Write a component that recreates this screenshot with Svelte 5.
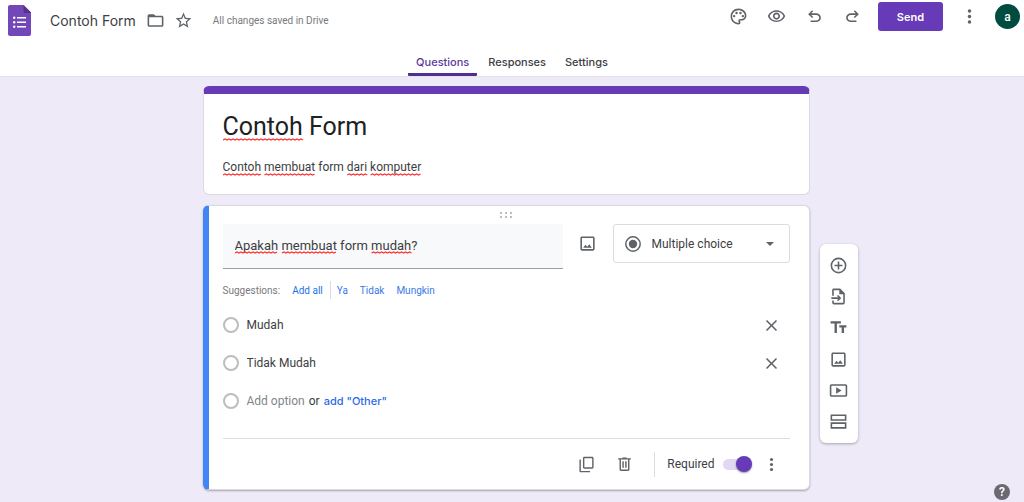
<script>
	let docName = $state('Contoh Form');
	let title = $state('Contoh Form');
	let description = $state('Contoh membuat form dari komputer');
	let question = $state('Apakah membuat form mudah?');
	let options = $state(['Mudah', 'Tidak Mudah']);
	let type = $state('Multiple choice');
	let required = $state(true);
	let activeTab = $state('Questions');

	const tabs = ['Questions', 'Responses', 'Settings'];
	const suggestions = ['Ya', 'Tidak', 'Mungkin'];
	const types = ['Short answer', 'Paragraph', 'Multiple choice', 'Checkboxes', 'Dropdown'];
	const dictionary = ['form'];

	const canvas = document.createElement('canvas').getContext('2d');

	// zigzag under every word that is not in the dictionary
	function spellMarks(text, size) {
		canvas.font = `${size}px Roboto`;
		let d = '';
		for (const match of text.matchAll(/[a-z]+/gi)) {
			if (dictionary.includes(match[0].toLowerCase())) continue;
			const start = canvas.measureText(text.slice(0, match.index)).width;
			const end = start + canvas.measureText(match[0]).width;
			d += `M${start} 2`;
			for (let x = start + 2, up = true; x <= end; x += 2, up = !up) {
				d += `L${x} ${up ? 1 : 2}`;
			}
		}
		return d;
	}

	function addOption(value) {
		options.push(value);
	}

	function removeOption(index) {
		options.splice(index, 1);
	}
</script>

{#snippet icon(name)}
	<svg class="icon" viewBox="0 0 24 24" aria-hidden="true">
		{#if name === 'folder'}
			<path d="M20 6h-8l-2-2H4c-1.1 0-2 .9-2 2v12c0 1.1.9 2 2 2h16c1.1 0 2-.9 2-2V8c0-1.1-.9-2-2-2zm0 12H4V8h16v10z" />
		{:else if name === 'star'}
			<path d="M22 9.24l-7.19-.62L12 2 9.19 8.63 2 9.24l5.46 4.73L5.82 21 12 17.27 18.18 21l-1.63-7.03L22 9.24zM12 15.4l-3.76 2.27 1-4.28-3.32-2.88 4.38-.38L12 6.1l1.71 4.04 4.38.38-3.32 2.88 1 4.28L12 15.4z" />
		{:else if name === 'palette'}
			<path d="M12 22C6.49 22 2 17.51 2 12S6.49 2 12 2s10 4.04 10 9c0 3.31-2.69 6-6 6h-1.77c-.28 0-.5.22-.5.5 0 .12.05.23.13.33.41.47.64 1.06.64 1.67A2.5 2.5 0 0 1 12 22zm0-18c-4.41 0-8 3.59-8 8s3.59 8 8 8c.28 0 .5-.22.5-.5a.54.54 0 0 0-.14-.35c-.41-.46-.63-1.05-.63-1.65a2.5 2.5 0 0 1 2.5-2.5H16c2.21 0 4-1.79 4-4 0-3.86-3.59-7-8-7z" />
			<circle cx="6.5" cy="11.5" r="1.5" />
			<circle cx="9.5" cy="7.5" r="1.5" />
			<circle cx="14.5" cy="7.5" r="1.5" />
			<circle cx="17.5" cy="11.5" r="1.5" />
		{:else if name === 'eye'}
			<path d="M12 6a9.77 9.77 0 0 1 8.82 5.5 9.647 9.647 0 0 1-17.64 0A9.77 9.77 0 0 1 12 6m0-2C7 4 2.73 7.11 1 11.5 2.73 15.89 7 19 12 19s9.27-3.11 11-7.5C21.27 7.11 17 4 12 4zm0 5a2.5 2.5 0 0 1 0 5 2.5 2.5 0 0 1 0-5m0-2c-2.48 0-4.5 2.02-4.5 4.5S9.52 16 12 16s4.5-2.02 4.5-4.5S14.48 7 12 7z" />
		{:else if name === 'undo' || name === 'redo'}
			<path
				transform={name === 'redo' ? 'matrix(-1 0 0 1 24 0)' : undefined}
				d="M7 19v-2h7.1c1.05 0 1.96-.33 2.74-1 .78-.67 1.16-1.5 1.16-2.5s-.38-1.83-1.16-2.5C16.06 10.33 15.15 10 14.1 10H7.8l2.6 2.6L9 14 4 9l5-5 1.4 1.4L7.8 8h6.3c1.62 0 3 .53 4.16 1.58S20 11.93 20 13.5s-.58 2.88-1.74 3.93S15.72 19 14.1 19z"
			/>
		{:else if name === 'more'}
			<circle cx="12" cy="5" r="2.2" />
			<circle cx="12" cy="12" r="2.2" />
			<circle cx="12" cy="19" r="2.2" />
		{:else if name === 'image'}
			<path d="M19 5v14H5V5h14m0-2H5c-1.1 0-2 .9-2 2v14c0 1.1.9 2 2 2h14c1.1 0 2-.9 2-2V5c0-1.1-.9-2-2-2z" />
			<path d="M6.5 17.5l3-4 2.2 2.5 2.5-3 3.3 4.5z" />
		{:else if name === 'close'}
			<path d="M19 6.4L17.6 5 12 10.6 6.4 5 5 6.4 10.6 12 5 17.6 6.4 19 12 13.4 17.6 19 19 17.6 13.4 12z" />
		{:else if name === 'copy'}
			<path d="M20 1H9C7.9 1 7 1.9 7 3v13c0 1.1.9 2 2 2h11c1.1 0 2-.9 2-2V3c0-1.1-.9-2-2-2zm0 15H9V3h11v13zM4 5H2v16c0 1.1.9 2 2 2h13v-2H4z" />
		{:else if name === 'trash'}
			<path d="M15 3V2H9v1H3v2h2v14c0 1.1.9 2 2 2h10c1.1 0 2-.9 2-2V5h2V3h-6zm2 16H7V5h10v14zM9 7.5h2v9H9zm4 0h2v9h-2z" />
		{:else if name === 'add'}
			<path d="M13 7h-2v4H7v2h4v4h2v-4h4v-2h-4V7zm-1-5a10 10 0 1 0 0 20 10 10 0 0 0 0-20zm0 18a8 8 0 1 1 0-16 8 8 0 0 1 0 16z" />
		{:else if name === 'import'}
			<path d="M14 2H6c-1.1 0-2 .9-2 2v7h2V4h7v5h5v11H6v-3H4v3c0 1.1.9 2 2 2h12c1.1 0 2-.9 2-2V8l-6-6z" />
			<path d="M11.5 10l-1.4 1.4 1.6 1.6H3v2h8.7l-1.6 1.6 1.4 1.4 4-4z" />
		{:else if name === 'text'}
			<path d="M2 4v3h5v12h3V7h5V4H2zm20 5h-9v3h3v7h3v-7h3V9z" />
		{:else if name === 'video'}
			<path d="M21 4H3c-1.1 0-2 .9-2 2v12c0 1.1.9 2 2 2h18c1.1 0 2-.9 2-2V6c0-1.1-.9-2-2-2zm0 14H3V6h18v12zM9 8v8l7-4z" />
		{:else if name === 'section'}
			<path d="M2 3v8h20V3H2zm18 6H4V5h16v4zM2 13v8h20v-8H2zm18 6H4v-4h16v4z" />
		{/if}
	</svg>
{/snippet}

<header>
	<div class="bar">
		<div class="file">
			<a class="home" href="#home" aria-label="Forms home">
				<svg viewBox="0 0 23 31" aria-hidden="true">
					<path fill="#7248b9" d="M2 0h13.5L23 7.5V29a2 2 0 0 1-2 2H2a2 2 0 0 1-2-2V2a2 2 0 0 1 2-2z" />
					<path fill="#54348a" d="M15.5 0L23 7.5V8h-6a1.5 1.5 0 0 1-1.5-1.5z" />
					<g fill="#fff">
						<circle cx="6.2" cy="12.8" r="1.2" />
						<circle cx="6.2" cy="17.3" r="1.2" />
						<circle cx="6.2" cy="21.8" r="1.2" />
						<path d="M9 12h9v1.6H9zM9 16.5h9v1.6H9zM9 21h9v1.6H9z" />
					</g>
				</svg>
			</a>
			<input class="doc-name" aria-label="Document name" spellcheck="false" bind:value={docName} />
			<button class="tool small" aria-label="Move to folder">{@render icon('folder')}</button>
			<button class="tool small" aria-label="Star">{@render icon('star')}</button>
			<span class="saved">All changes saved in Drive</span>
		</div>
		<div class="tools">
			<button class="tool" aria-label="Customize theme">{@render icon('palette')}</button>
			<button class="tool" aria-label="Preview">{@render icon('eye')}</button>
			<button class="tool" aria-label="Undo">{@render icon('undo')}</button>
			<button class="tool" aria-label="Redo">{@render icon('redo')}</button>
			<button class="send">Send</button>
			<button class="tool small" aria-label="More">{@render icon('more')}</button>
			<button class="avatar">a</button>
		</div>
	</div>
	<div class="tabs" role="tablist">
		{#each tabs as tab}
			<button
				role="tab"
				class:active={tab === activeTab}
				aria-selected={tab === activeTab}
				onclick={() => (activeTab = tab)}
			>
				{tab}
			</button>
		{/each}
	</div>
</header>

<main>
	<section class="card intro">
		<div class="editable title">
			<input aria-label="Form title" spellcheck="false" bind:value={title} />
			<svg class="marks" aria-hidden="true"><path d={spellMarks(title, 25)} /></svg>
		</div>
		<div class="editable description">
			<input aria-label="Form description" spellcheck="false" bind:value={description} />
			<svg class="marks" aria-hidden="true"><path d={spellMarks(description, 12)} /></svg>
		</div>
	</section>

	<section class="card question">
		<div class="drag">
			<svg viewBox="0 0 12 6" aria-hidden="true">
				<path d="M0 0h2v2H0zM5 0h2v2H5zM10 0h2v2h-2zM0 4h2v2H0zM5 4h2v2H5zM10 4h2v2h-2z" />
			</svg>
		</div>

		<div class="prompt">
			<div class="field">
				<div class="editable">
					<input aria-label="Question" spellcheck="false" bind:value={question} />
					<svg class="marks" aria-hidden="true"><path d={spellMarks(question, 13)} /></svg>
				</div>
			</div>
			<button class="tool small" aria-label="Add image">{@render icon('image')}</button>
			<div class="type">
				<select aria-label="Question type" bind:value={type}>
					{#each types as name}
						<option>{name}</option>
					{/each}
				</select>
				<svg class="type-icon" viewBox="0 0 16 16" aria-hidden="true">
					<circle cx="8" cy="8" r="7.2" fill="none" stroke="#5f6368" stroke-width="1.5" />
					<circle cx="8" cy="8" r="4.2" fill="#5f6368" />
				</svg>
				<svg class="arrow" viewBox="0 0 8 4" aria-hidden="true"><path d="M0 0h8L4 4z" /></svg>
			</div>
		</div>

		<div class="suggestions">
			<span>Suggestions:</span>
			<button class="add-all" onclick={() => suggestions.forEach(addOption)}>Add all</button>
			{#each suggestions as suggestion}
				<button onclick={() => addOption(suggestion)}>{suggestion}</button>
			{/each}
		</div>

		<div class="options">
			{#each options as option, i}
				<div class="option">
					<input type="radio" name="answer" disabled aria-label={option} />
					<input
						class="option-text"
						aria-label="Option {i + 1}"
						spellcheck="false"
						bind:value={options[i]}
					/>
					<button class="tool" aria-label="Remove option" onclick={() => removeOption(i)}>
						{@render icon('close')}
					</button>
				</div>
			{/each}
			<div class="option">
				<input type="radio" name="answer" disabled aria-label="Add option" />
				<button class="add-option" onclick={() => addOption(`Option ${options.length + 1}`)}>
					Add option
				</button>
				<span class="or">or</span>
				<button class="add-other" onclick={() => addOption('Other...')}>add "Other"</button>
			</div>
		</div>

		<footer>
			<button class="tool" aria-label="Duplicate">{@render icon('copy')}</button>
			<button class="tool" aria-label="Delete">{@render icon('trash')}</button>
			<label class="required">
				Required
				<input type="checkbox" role="switch" bind:checked={required} />
			</label>
			<button class="tool" aria-label="More options">{@render icon('more')}</button>
		</footer>
	</section>

	<aside aria-label="Add to form">
		<button class="tool" aria-label="Add question">{@render icon('add')}</button>
		<button class="tool" aria-label="Import questions">{@render icon('import')}</button>
		<button class="tool" aria-label="Add title and description">{@render icon('text')}</button>
		<button class="tool" aria-label="Add image">{@render icon('image')}</button>
		<button class="tool" aria-label="Add video">{@render icon('video')}</button>
		<button class="tool" aria-label="Add section">{@render icon('section')}</button>
	</aside>
</main>

<button class="help" aria-label="Help">?</button>

<style>
	:global(body) {
		background: #eeeaf7;
		color: #202124;
		font-family: Roboto, sans-serif;
		font-size: 12px;
	}

	button,
	input,
	select {
		box-sizing: border-box;
		margin: 0;
		padding: 0;
		border: 0;
		background: none;
		color: inherit;
		font: inherit;
	}

	button {
		cursor: pointer;
	}

	.icon {
		display: block;
		width: 19px;
		height: 19px;
		fill: #5f6368;
	}

	.tool {
		display: flex;
		flex: none;
		align-items: center;
		justify-content: center;
		width: 38px;
		height: 20px;
	}

	.tool.small {
		width: 26px;
	}

	/* header */
	header {
		background: #fff;
		border-bottom: 1px solid #e3e1e8;
	}

	.bar {
		display: flex;
		align-items: flex-start;
		justify-content: space-between;
		height: 50px;
		padding: 0 4px 0 8px;
	}

	.file {
		display: flex;
		align-items: center;
		height: 41px;
	}

	.home svg {
		display: block;
		width: 23px;
		height: 31px;
	}

	.doc-name {
		field-sizing: content;
		margin: 0 7px 0 19px;
		color: #3c4043;
		font-family: Inter, sans-serif;
		font-size: 14px;
		line-height: 20px;
	}

	.file .tool + .tool {
		margin-left: 2px;
	}

	.saved {
		margin-left: 16px;
		color: #77797d;
		font-size: 10px;
		line-height: 16px;
	}

	.tools {
		display: flex;
		align-items: center;
		height: 33px;
	}

	.send {
		width: 65px;
		height: 29px;
		margin: 0 13px 0 7px;
		border-radius: 3px;
		background: #673ab7;
		color: #fff;
		font-family: Inter, sans-serif;
		font-size: 11px;
		font-weight: 600;
	}

	.avatar {
		width: 25px;
		height: 25px;
		margin-left: 13px;
		border-radius: 50%;
		background: #004d40;
		color: #fff;
		font-weight: 500;
		line-height: 24px;
	}

	.tabs {
		display: flex;
		justify-content: center;
		gap: 3px;
	}

	.tabs button {
		padding: 4px 8px 3px;
		border-bottom: 3px solid transparent;
		color: #3c4043;
		font-family: Inter, sans-serif;
		font-size: 11px;
		font-weight: 500;
		line-height: 16px;
	}

	.tabs .active {
		border-bottom-color: #4f2d91;
		border-radius: 0 0 1px 1px;
		color: #5b3a9b;
	}

	/* form */
	main {
		display: grid;
		grid-template-columns: 1fr minmax(0, 607px) 1fr;
		row-gap: 10px;
		padding: 9px 12px 11px 0;
	}

	.card {
		box-sizing: border-box;
		grid-column: 2;
		border: 1px solid #dcd9e3;
		border-radius: 6px;
		background: #fff;
	}

	.intro {
		padding: 16px 19px 19px;
		border-top: 8px solid #673ab7;
	}

	.editable {
		position: relative;
	}

	.editable input {
		display: block;
		width: 100%;
	}

	.marks {
		position: absolute;
		bottom: -1px;
		left: 0;
		width: 100%;
		height: 3px;
		pointer-events: none;
	}

	.marks path {
		fill: none;
		stroke: #f33;
		stroke-width: 1.3;
	}

	.title input {
		height: 36px;
		padding-bottom: 4px;
		font-size: 25px;
	}

	.description {
		margin-top: 13px;
	}

	.description input,
	.field input {
		height: 16px;
		color: #3c4043;
	}

	.title .marks {
		bottom: 5px;
	}

	.question {
		padding: 6px 19px 0 14px;
		border-left: 6px solid #4285f4;
		box-shadow: 0 1px 2px rgba(0, 0, 0, 0.3);
	}

	.drag {
		display: flex;
		justify-content: center;
		margin-bottom: 6px;
	}

	.drag svg {
		width: 12px;
		height: 6px;
		fill: #bdbdbd;
	}

	.prompt {
		display: flex;
		align-items: flex-start;
		gap: 12px;
	}

	.prompt .tool {
		height: 38px;
	}

	.field {
		flex: 1;
		padding: 13px 12px 15px;
		border-bottom: 1px solid #9a9da1;
		background: #f8f9fa;
		font-size: 13px;
	}

	.type {
		display: grid;
		align-items: center;
		width: 177px;
	}

	.type > * {
		grid-area: 1 / 1;
	}

	.type select {
		width: 100%;
		height: 39px;
		padding-left: 38px;
		border: 1px solid #dadce0;
		border-radius: 3px;
		appearance: none;
		color: #3c4043;
	}

	.type svg {
		pointer-events: none;
	}

	.type-icon {
		width: 16px;
		height: 16px;
		margin-left: 12px;
	}

	.arrow {
		justify-self: end;
		width: 8px;
		height: 4px;
		margin-right: 16px;
		fill: #5f6368;
	}

	.suggestions {
		display: flex;
		align-items: center;
		gap: 12px;
		height: 18px;
		margin-top: 12px;
		color: #77797d;
		font-size: 10px;
	}

	.suggestions button {
		color: #3b78e7;
	}

	.suggestions .add-all {
		height: 18px;
		margin-right: -6px;
		padding-right: 7px;
		border-right: 1px solid #dadce0;
		color: #1a73e8;
	}

	.options {
		margin-top: 7px;
		padding-bottom: 18px;
		border-bottom: 1px solid #dadce0;
	}

	.option {
		display: flex;
		align-items: center;
		height: 38px;
	}

	.option .tool,
	footer .tool {
		width: 36px;
	}

	.option input[type='radio'] {
		flex: none;
		width: 16px;
		height: 16px;
		margin-right: 8px;
		border: 2px solid #bdbdbd;
		border-radius: 50%;
		appearance: none;
	}

	.option-text {
		flex: 1;
		min-width: 0;
		height: 20px;
		color: #3c4043;
	}

	.add-option {
		color: #80868b;
	}

	.or {
		margin: 0 4px;
		color: #3c4043;
	}

	.add-other {
		color: #2a6bea;
		font-family: Inter, sans-serif;
		font-size: 11px;
		font-weight: 500;
	}

	footer {
		display: flex;
		align-items: center;
		justify-content: flex-end;
		gap: 2px;
		height: 50px;
	}

	footer .icon {
		width: 17px;
		height: 17px;
	}

	.required {
		display: flex;
		align-items: center;
		gap: 8px;
		height: 25px;
		margin-left: 10px;
		padding-left: 12px;
		border-left: 1px solid #dadce0;
		color: #3c4043;
	}

	.required input {
		display: flex;
		align-items: center;
		width: 29px;
		height: 11px;
		border-radius: 6px;
		background: #d9d9d9;
		appearance: none;
	}

	.required input::before {
		content: '';
		width: 16px;
		height: 16px;
		border-radius: 50%;
		background: #fff;
		box-shadow: 0 1px 2px rgba(0, 0, 0, 0.4);
	}

	.required input:checked {
		justify-content: flex-end;
		background: #e1d8f1;
	}

	.required input:checked::before {
		background: #673ab7;
	}

	aside {
		display: flex;
		grid-area: 2 / 3;
		flex-direction: column;
		align-self: start;
		justify-content: space-between;
		box-sizing: border-box;
		width: 38px;
		height: 199px;
		margin: 39px 0 0 10px;
		padding: 11px 0;
		border-radius: 6px;
		background: #fff;
		box-shadow: 0 1px 3px rgba(0, 0, 0, 0.3);
	}

	.help {
		position: fixed;
		right: 14px;
		bottom: 2px;
		width: 16px;
		height: 16px;
		border-radius: 50%;
		background: #6d6972;
		color: #fff;
		font-weight: 700;
		line-height: 16px;
	}
</style>
